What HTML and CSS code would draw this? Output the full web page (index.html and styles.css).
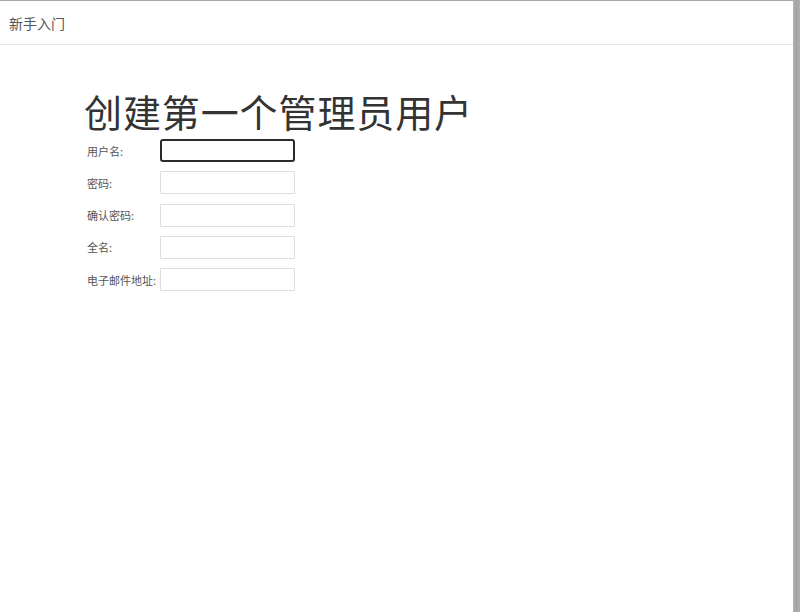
FILE: index.html
```html
<!DOCTYPE html>
<html lang="zh">
<head>
<meta charset="utf-8">
<link rel="stylesheet" href="styles.css">
</head>
<body>
<div class="shell">
  <div class="window">
    <header class="topbar">新手入门</header>
    <main class="content">
      <h1 class="title">创建第一个管理员用户</h1>
      <form class="form">
        <div class="row"><label>用户名:</label><input class="field focused" type="text"></div>
        <div class="row"><label>密码:</label><input class="field" type="password"></div>
        <div class="row"><label>确认密码:</label><input class="field" type="password"></div>
        <div class="row"><label>全名:</label><input class="field" type="text"></div>
        <div class="row"><label>电子邮件地址:</label><input class="field" type="text"></div>
      </form>
    </main>
  </div>
  <div class="edge"></div>
</div>
</body>
</html>
```
FILE: styles.css
```css
html, body {
  margin: 0;
  padding: 0;
  height: 100%;
  background: #fff;
  font-family: "Noto Sans CJK SC", "Liberation Sans", sans-serif;
}
.shell {
  display: flex;
  height: 612px;
  width: 800px;
  overflow: hidden;
}
.window {
  width: 793px;
  border-top: 1px solid #a8a8a8;
  background: #fff;
  box-sizing: border-box;
}
.edge {
  width: 7px;
  background: linear-gradient(to right, #b5b5b5, #a4a4a4 40%, #afafaf);
}
.topbar {
  height: 44px;
  box-sizing: border-box;
  border-bottom: 1px solid #e6e6e6;
  padding: 11px 0 0 9px;
  font-size: 14px;
  line-height: 22px;
  color: #555;
}
.content {
  padding: 41px 0 0 84px;
}
.title {
  margin: 0;
  font-weight: normal;
  font-size: 38px;
  line-height: 50px;
  color: #333;
  letter-spacing: 0.9px;
}
.form {
  display: flex;
  flex-direction: column;
  gap: 9.3px;
  margin-top: 3px;
}
.row {
  display: flex;
  align-items: center;
  height: 23px;
}
.row label {
  width: 73px;
  padding-left: 3px;
  font-size: 11px;
  color: #555;
  white-space: nowrap;
}
.field {
  width: 135px;
  height: 23px;
  box-sizing: border-box;
  border: 1px solid #dedede;
  border-radius: 1px;
  margin: 0;
  padding: 0 4px;
  background: #fff;
  outline: none;
}
.field.focused {
  border: 2px solid #2b2b2b;
  border-radius: 3px;
}
```
